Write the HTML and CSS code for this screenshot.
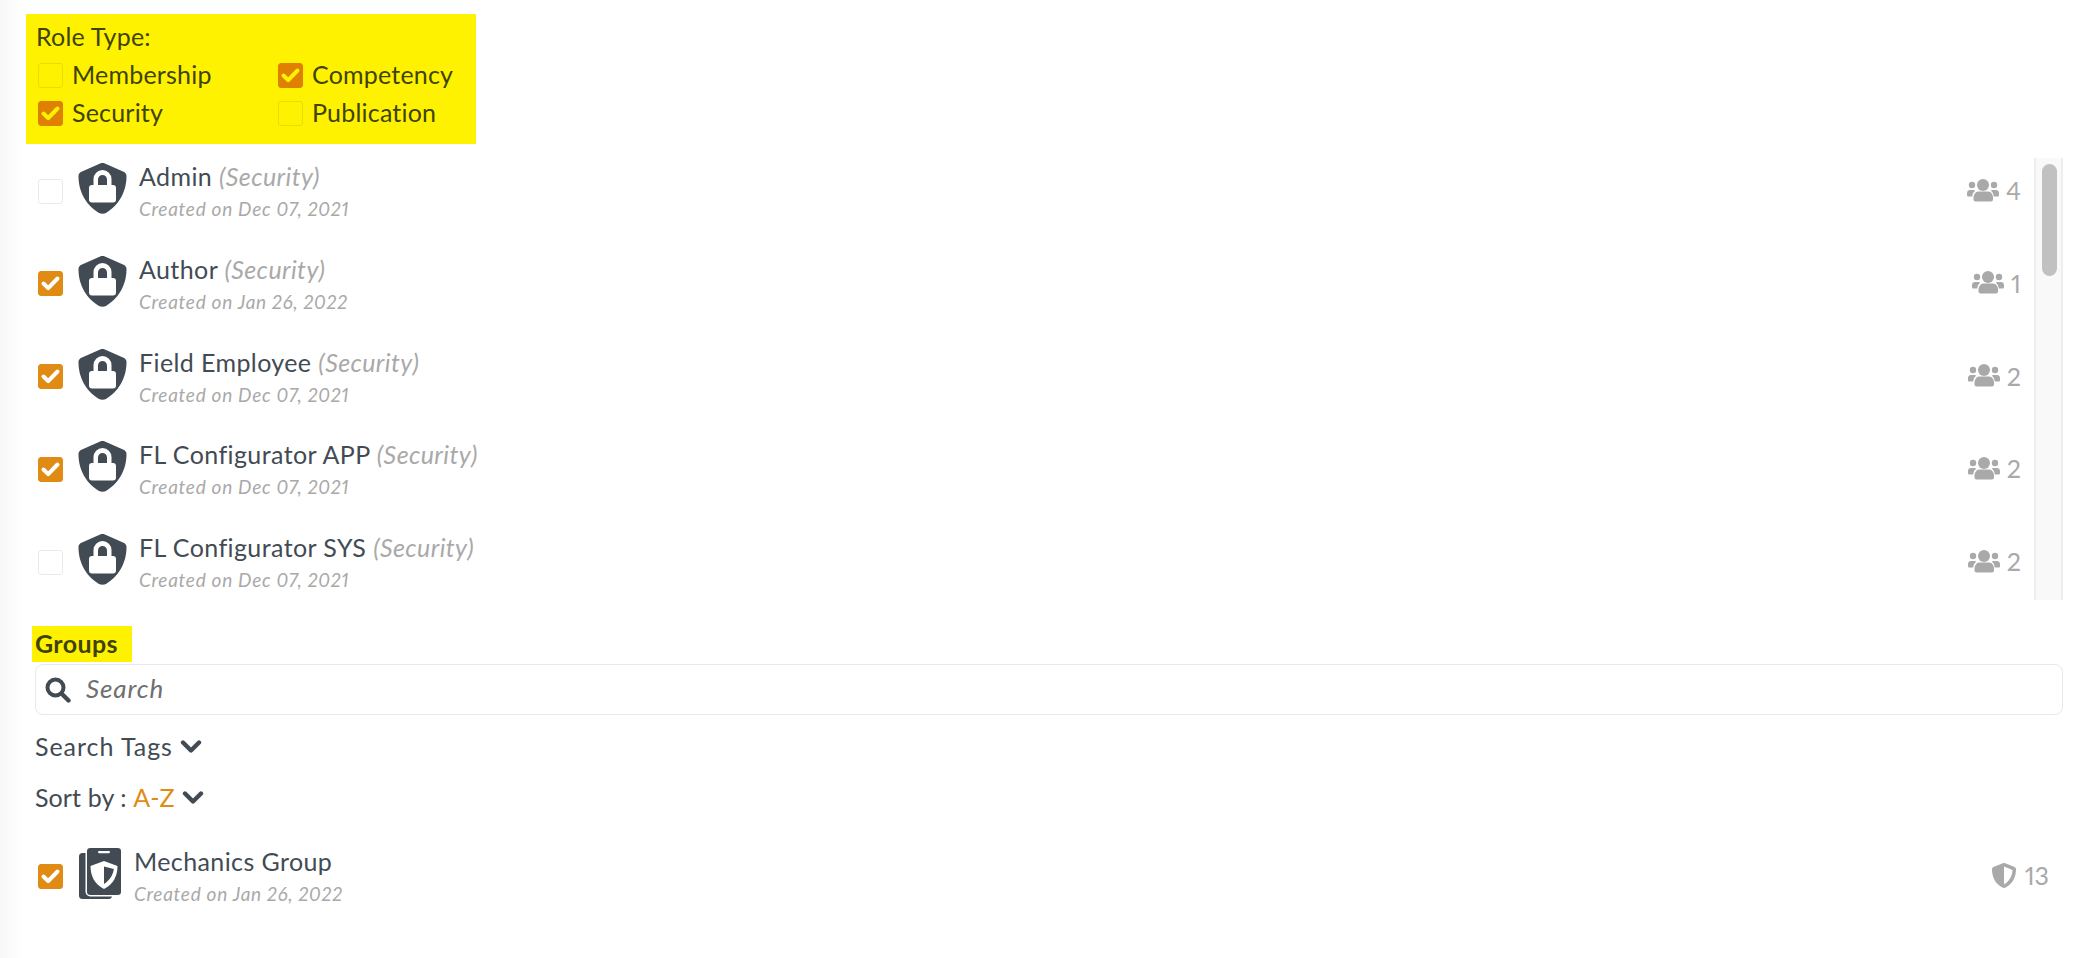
FILE: index.html
```html
<!DOCTYPE html>
<html lang="en">
<head>
<meta charset="utf-8">
<title>Role Type</title>
<link rel="stylesheet" href="styles.css">
</head>
<body>
<svg class="defs" width="0" height="0" aria-hidden="true">
  <symbol id="tick" viewBox="0 0 25 24"><path d="M5.5 12.5l4.700 4.700 9.300-9.700" fill="none" stroke="currentColor" stroke-width="4" stroke-linecap="round" stroke-linejoin="round"/></symbol>
  <symbol id="shieldlock" viewBox="0 0 49 51">
    <path d="M24.500 0C26 0 27 .5 28 1L45 8.500C47.500 9.500 48.500 11 48.500 13C48.500 25 44 40 28 50C26 51 23 51 21 50C5 40 .5 25 .5 13C.5 11 1.500 9.500 4 8.500L21 1C22 .5 23 0 24.500 0Z" fill="#424b54"/>
    <path d="M15.500 24V16A9 9 0 0 1 33.500 16V24H29V16.500A4.500 4.500 0 0 0 20 16.500V24Z" fill="#fff"/>
    <rect x="11" y="22" width="27" height="17.500" rx="3" fill="#fff"/>
  </symbol>
  <symbol id="people" viewBox="0 0 32 23">
    <circle cx="16" cy="6" r="6"/><circle cx="5" cy="6" r="3.200"/><circle cx="27" cy="6" r="3.200"/>
    <path d="M11 12.500h10c3 0 5 3 5 6v2c0 1-1 2-2 2H8.500c-1 0-2-1-2-2v-2c0-3 2.500-6 4.500-6z"/>
    <path d="M3 11h4l1.200.8C6.500 13 5.500 15 5.200 17.500H1.500C.5 17.500 0 17 0 16v-2c0-2 1.300-3 3-3z"/>
    <path d="M29 11h-4l-1.200.8c1.700 1.200 2.700 3.200 3 5.700h3.700c1 0 1.500-.5 1.500-1.500v-2c0-2-1.300-3-3-3z"/>
  </symbol>
  <symbol id="badge" viewBox="0 0 43 51">
    <rect x="0" y="5" width="33" height="46" rx="3.500" fill="#424b54"/>
    <rect x="7.250" y="-.75" width="35.500" height="48.500" rx="4" fill="#424b54" stroke="#fff" stroke-width="1.500"/>
    <rect x="19" y="3" width="12" height="2.200" rx="1.100" fill="#fff"/>
    <path d="M25 13L38.500 18C38.500 28 34.500 36 25 41C15.500 36 11.500 28 11.500 18Z" fill="#fff"/>
    <path d="M25 18.500V36C31 32 34 27 34.800 21Z" fill="#424b54"/>
  </symbol>
  <symbol id="halfshield" viewBox="0 0 24 25">
    <path fill-rule="evenodd" d="M12 0c.8 0 1.500.3 2.500.7l7.500 3c1.300.5 2 1.300 2 2.800C24 12 22 19 16 23c-1.800 1.200-3 2-4 2s-2.200-.8-4-2C2 19 0 12 0 6.500 0 5 .7 4.200 2 3.700l7.500-3C10.500.3 11.200 0 12 0zm0 3.500v18c5-3 8.200-8 8.500-14.500z"/>
  </symbol>
  <symbol id="chev" viewBox="0 0 22 15"><path d="M3 3.500l8 8 8-8" fill="none" stroke="currentColor" stroke-width="4.400" stroke-linecap="round" stroke-linejoin="round"/></symbol>
</svg>

<main class="page">
  <section class="roletype">
    <div class="roletype-label">Role Type:</div>
    <div class="roletype-grid">
      <label class="opt"><span class="box box-y"></span>Membership</label>
      <label class="opt"><span class="box box-yc"><svg class="tick"><use href="#tick"/></svg></span>Competency</label>
      <label class="opt"><span class="box box-yc"><svg class="tick"><use href="#tick"/></svg></span>Security</label>
      <label class="opt"><span class="box box-y"></span>Publication</label>
    </div>
  </section>

  <section class="listwrap">
    <div class="list">
      <div class="row">
        <span class="box"></span>
        <svg class="ico-shield"><use href="#shieldlock"/></svg>
        <div class="info"><div class="title">Admin <em>(Security)</em></div><div class="sub">Created on Dec 07, 2021</div></div>
        <div class="count"><svg class="ico-people"><use href="#people"/></svg>4</div>
      </div>
      <div class="row">
        <span class="box box-c"><svg class="tick"><use href="#tick"/></svg></span>
        <svg class="ico-shield"><use href="#shieldlock"/></svg>
        <div class="info"><div class="title">Author <em>(Security)</em></div><div class="sub">Created on Jan 26, 2022</div></div>
        <div class="count"><svg class="ico-people"><use href="#people"/></svg>1</div>
      </div>
      <div class="row">
        <span class="box box-c"><svg class="tick"><use href="#tick"/></svg></span>
        <svg class="ico-shield"><use href="#shieldlock"/></svg>
        <div class="info"><div class="title">Field Employee <em>(Security)</em></div><div class="sub">Created on Dec 07, 2021</div></div>
        <div class="count"><svg class="ico-people"><use href="#people"/></svg>2</div>
      </div>
      <div class="row">
        <span class="box box-c"><svg class="tick"><use href="#tick"/></svg></span>
        <svg class="ico-shield"><use href="#shieldlock"/></svg>
        <div class="info"><div class="title">FL Configurator APP <em>(Security)</em></div><div class="sub">Created on Dec 07, 2021</div></div>
        <div class="count"><svg class="ico-people"><use href="#people"/></svg>2</div>
      </div>
      <div class="row">
        <span class="box"></span>
        <svg class="ico-shield"><use href="#shieldlock"/></svg>
        <div class="info"><div class="title">FL Configurator SYS <em>(Security)</em></div><div class="sub">Created on Dec 07, 2021</div></div>
        <div class="count"><svg class="ico-people"><use href="#people"/></svg>2</div>
      </div>
    </div>
    <div class="track"><div class="thumb"></div></div>
  </section>

  <h2 class="groups"><span class="groups-mark">Groups</span></h2>
  <div class="search">
    <svg class="ico-search" viewBox="0 0 26 26"><circle cx="10.500" cy="10.500" r="8" fill="none" stroke="#424b54" stroke-width="4"/><path d="M16.500 16.500l7 7" stroke="#424b54" stroke-width="4.400" stroke-linecap="round"/></svg>
    <span class="search-ph">Search</span>
  </div>
  <div class="tags">Search Tags<svg class="ico-chev"><use href="#chev"/></svg></div>
  <div class="sort">Sort by : <span class="accent">A-Z</span><svg class="ico-chev"><use href="#chev"/></svg></div>
  <div class="group-row">
    <span class="box box-c"><svg class="tick"><use href="#tick"/></svg></span>
    <svg class="ico-badge"><use href="#badge"/></svg>
    <div class="info info-g"><div class="title">Mechanics Group</div><div class="sub">Created on Jan 26, 2022</div></div>
    <div class="count count-g"><svg class="ico-half"><use href="#halfshield"/></svg>13</div>
  </div>
</main>
</body>
</html>
```
FILE: styles.css
```css
* { box-sizing: border-box; }
html, body { margin: 0; height: 100%; }
body {
  background: linear-gradient(90deg, #f8f8f8 0, #fff 24px);
  color: #424b54;
  font-family: Lato, "Liberation Sans", sans-serif;
  font-size: 25px;
  letter-spacing: .4px;
  font-variant-numeric: proportional-nums;
  overflow: hidden;
}
.defs { position: absolute; }
.page { padding: 14px 31px 0 35px; }

.roletype {
  width: 450px;
  height: 130px;
  margin-left: -9px;
  padding: 4px 0 0 10px;
  background: #fff200;
  color: #3f4306;
  letter-spacing: .2px;
}
.roletype-label { line-height: 36px; }
.roletype-grid {
  display: grid;
  grid-template-columns: 240px 1fr;
  row-gap: 6px;
  margin-top: 3.500px;
  padding-left: 2px;
}
.opt { display: flex; align-items: center; gap: 9px; line-height: 32px; height: 32px; }
.opt .box { margin-top: 3px; }

.box {
  flex: none;
  display: flex;
  width: 25px;
  height: 25px;
  border: 1.5px solid #eaeaea;
  border-radius: 3px;
  background: #fff;
}
.box-y { background: #fff200; border-color: #e8dc00; }
.box-yc { background: #e08000; border-color: #e08000; color: #fff200; }
.box-c { background: #e08b14; border-color: #e08b14; color: #fff; }
.tick { flex: none; width: 25px; height: 24px; margin: -1px -1.5px; overflow: visible; }

.listwrap { display: flex; height: 456px; padding-top: 14px; }
.list { flex: 1; min-width: 0; height: 442px; overflow: hidden; padding: 5px 0 0 3px; }
.row {
  display: flex;
  align-items: center;
  height: 56px;
  margin-bottom: 36.75px;
  padding-right: 8px;
}
.ico-shield { flex: none; width: 49px; height: 51px; margin: 0 12px 0 15px; align-self: flex-start; }
.info { flex: 1; align-self: flex-start; min-width: 0; margin-top: -1px; }
.title { line-height: 28px; white-space: nowrap; }
.title em { color: #a9a9a9; }
.sub { margin-top: 7px; font-size: 19px; letter-spacing: .72px; line-height: 24px; font-style: italic; color: #a9a9a9; white-space: nowrap; }
.count { display: flex; align-items: center; gap: 7px; margin-top: -2px; color: #a9a9a9; letter-spacing: 0; }
.count-g { gap: 9px; }
.ico-people { width: 32px; height: 23px; fill: #a9a9a9; }
.ico-half { width: 24px; height: 25px; fill: #a9a9a9; }

.track {
  flex: none;
  width: 29px;
  height: 442px;
  margin-left: 5px;
  padding: 6px 6px 0;
  background: #f9f9f9;
  border-left: 2px solid #eee;
  border-right: 2px solid #eee;
}
.thumb { width: 15px; height: 112px; border-radius: 8px; background: #c1c1c1; }

.groups { margin: 26px 0 0; font-size: 25px; line-height: 34px; font-weight: 700; height: 36px; }
.groups-mark { display: block; width: 100px; height: 36px; margin-left: -3px; padding-left: 3px; background: #fff200; color: #3f4306; }

.search {
  display: flex;
  align-items: center;
  gap: 15px;
  height: 51px;
  margin-top: 2px;
  padding-left: 9px;
  border: 1.5px solid #e9e9e9;
  border-radius: 8px;
}
.ico-search { width: 26px; height: 26px; }
.search-ph { margin-top: -4px; font-size: 26px; letter-spacing: .9px; font-style: italic; color: #6f6f6f; }

.tags, .sort { display: flex; align-items: center; white-space: pre; line-height: 32px; }
.tags { margin-top: 15px; letter-spacing: .95px; }
.sort { margin-top: 19px; letter-spacing: .1px; }
.accent { color: #e08b14; }
.ico-chev { width: 22px; height: 15px; margin-left: 7px; color: #424b54; }

.group-row { display: flex; align-items: center; height: 56px; margin-top: 35px; padding: 0 14px 0 3px; }
.ico-badge { flex: none; width: 43px; height: 51px; margin: 0 12px 0 16px; align-self: flex-start; }
```
